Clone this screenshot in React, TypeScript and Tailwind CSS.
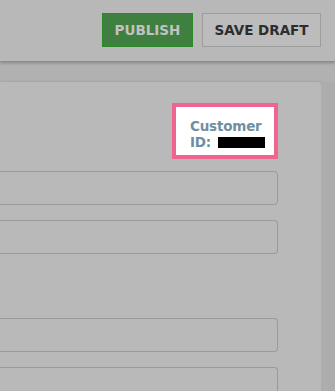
import React from "react";

export default function App() {
  return (
    <div className="w-[335px] h-[391px] overflow-hidden bg-[#b1b1b1] flex flex-col" style={{ fontFamily: '"DejaVu Sans", sans-serif' }}>
      <div className="h-[61px] shrink-0 bg-[#b8b8b8] flex items-start justify-end gap-[9px] pt-[13px] pr-[14px] shadow-[0_2px_3px_rgba(0,0,0,0.25)] relative z-10">
        <button className="h-[34px] w-[91px] bg-[#3f7f3f] border border-[#2a8a2a] text-[#c2c2c2] font-bold text-[13.5px]">PUBLISH</button>
        <button className="h-[34px] w-[119px] bg-[#bcbcbc] border border-[#9c9c9c] text-[#2d2d2d] font-bold text-[13.5px]">SAVE DRAFT</button>
      </div>
      <div className="flex-1 flex pt-[21px]">
        <div className="w-[321px] bg-[#b9b9b9] rounded-tr-[3px] shadow-[1px_0_3px_rgba(0,0,0,0.15)] pr-[43px] pt-[21px] flex flex-col">
          <div className="flex justify-end">
            <div className="w-[106px] h-[56px] border-[4px] border-[#f06590] bg-white pl-[14px] pt-[11px] text-[13.5px] font-bold text-[#6f8fa0] leading-[16px] tracking-[-0.2px]">
              <div>Customer</div>
              <div className="flex items-center">
                <span>ID:</span>
                <span className="ml-[7px] inline-block w-[47px] h-[11px] bg-black"></span>
              </div>
            </div>
          </div>
          <div className="mt-[12px] h-[34px] border border-[#9a9a9a] rounded-r-[4px] border-l-0"></div>
          <div className="mt-[15px] h-[34px] border border-[#9a9a9a] rounded-r-[4px] border-l-0"></div>
          <div className="mt-[64px] h-[34px] border border-[#9a9a9a] rounded-r-[4px] border-l-0"></div>
          <div className="mt-[15px] h-[34px] border border-[#9a9a9a] rounded-r-[4px] border-l-0"></div>
        </div>
        <div className="flex-1 bg-[#adadad]"></div>
      </div>
    </div>
  );
}
